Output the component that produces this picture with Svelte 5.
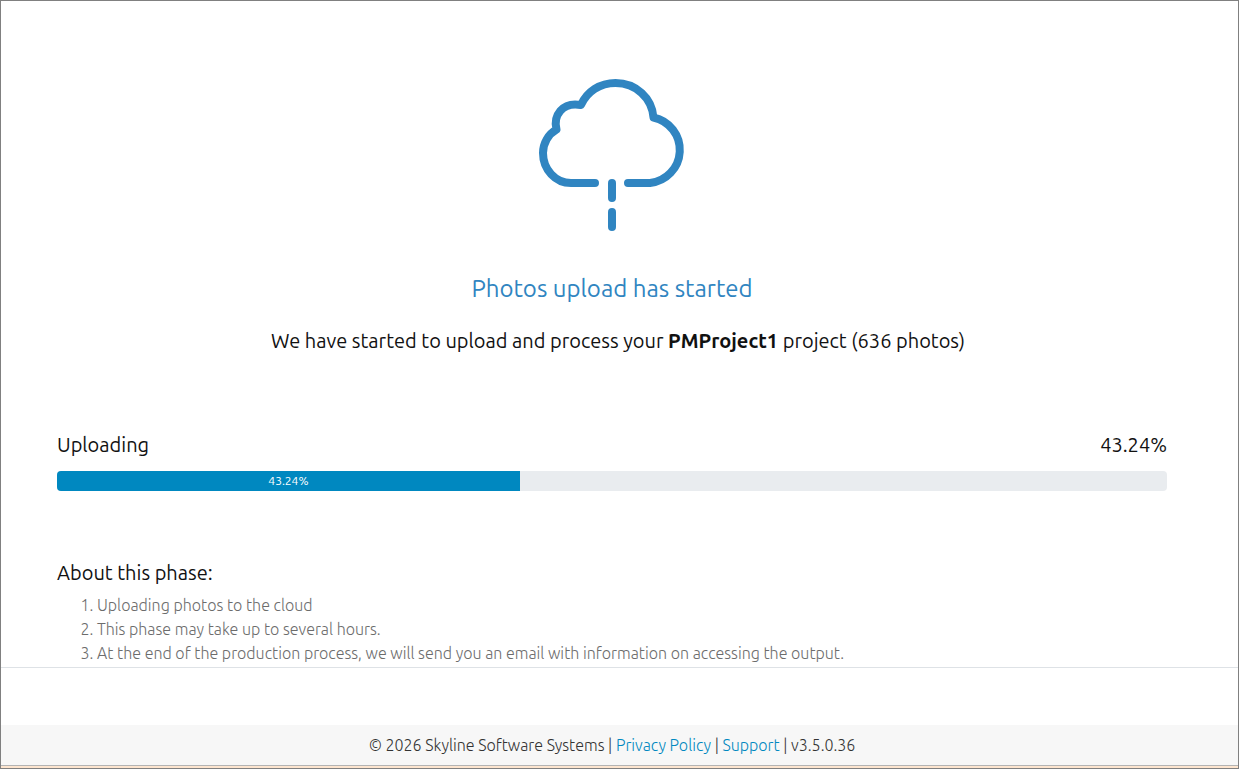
<script lang="ts">
  interface Props {
    project?: string;
    photos?: number;
    progress?: number;
    /** Drawn width of the bar, which trails the real progress */
    filled?: number;
    version?: string;
  }

  let {
    project = 'PMProject1',
    photos = 636,
    progress = 43.24,
    filled = 41.7,
    version = 'v3.5.0.36',
  }: Props = $props();

  const notes = [
    'Uploading photos to the cloud',
    'This phase may take up to several hours.',
    'At the end of the production process, we will send you an email with information on accessing the output.',
  ];

  let percent = $derived(`${progress.toFixed(2)}%`);
</script>

<div class="page">
  <main class="content">
    <svg class="cloud" viewBox="0 0 153 160" aria-hidden="true">
      <path d="M59 108H35C19.500 108 7 94.500 7 78C7 68 12.500 59 20.500 54.500C17 41 26 26.500 45 30C51 16.500 64 8 79.500 8C100 8 116 23 117.500 42.500A33.200 33.200 0 0 1 114 108H92" />
      <path d="M76 108V123M76 137V152" />
    </svg>

    <h1 class="title">Photos upload has started</h1>
    <p class="message">
      We have started to upload and process your <strong>{project}</strong> project ({photos} photos)
    </p>

    <section class="upload">
      <div class="upload__head">
        <span id="upload-label">Uploading</span>
        <span>{percent}</span>
      </div>
      <div
        class="bar"
        role="progressbar"
        aria-labelledby="upload-label"
        aria-valuemin="0"
        aria-valuemax="100"
        aria-valuenow={progress}
      >
        <div class="bar__fill" style:width={`${filled}%`}>{percent}</div>
      </div>
    </section>

    <section class="about">
      <h2 class="about__title">About this phase:</h2>
      <ol class="about__list">
        {#each notes as note}
          <li>{note}</li>
        {/each}
      </ol>
    </section>
  </main>

  <footer class="footer">
    © 2026 Skyline Software Systems | <a href="#privacy">Privacy Policy</a> | <a href="#support">Support</a> | {version}
  </footer>
</div>

<style>
  :global(body) {
    margin: 0;
    background: #fff;
  }

  .page {
    box-sizing: border-box;
    display: flex;
    flex-direction: column;
    min-height: 100vh;
    border: 1px solid #808080;
    font-family: Ubuntu, 'Noto Sans', sans-serif;
    font-size: 20px;
    line-height: 28px;
    color: #111;
  }

  .content {
    display: flex;
    flex-direction: column;
    padding: 74px 71px 0 56px;
    border-bottom: 1px solid #dee2e6;
  }

  .cloud {
    align-self: center;
    width: 153px;
    height: 160px;
    fill: none;
    stroke: #3085c1;
    stroke-width: 8;
    stroke-linecap: round;
    stroke-linejoin: round;
  }

  .title {
    margin: 37px 0 0;
    font-size: 24px;
    font-weight: 400;
    line-height: 34px;
    text-align: center;
    color: #3085c1;
  }

  .message {
    margin: 21px 0 0;
    padding-left: 12px;
    text-align: center;
  }

  .upload {
    margin-top: 76px;
  }

  .upload__head {
    display: flex;
    justify-content: space-between;
  }

  .bar {
    height: 20px;
    margin-top: 12px;
    overflow: hidden;
    border-radius: 4px;
    background: #e9ecef;
  }

  .bar__fill {
    height: 100%;
    background: #0088c0;
    color: #fff;
    font-size: 12px;
    line-height: 20px;
    text-align: center;
  }

  .about {
    margin-top: 68px;
  }

  .about__title {
    margin: 0;
    font-size: 20px;
    font-weight: 400;
    line-height: 28px;
  }

  .about__list {
    margin: 6px 0 0;
    padding: 0 0 2px 40px;
    font-size: 16px;
    font-weight: 300;
    line-height: 24px;
    color: #6c6c6c;
  }

  .footer {
    margin-top: auto;
    padding: 6px 15px 6px 0;
    border-bottom: 1px solid #b4b4b4;
    box-shadow: 0 2px #fde5cf;
    margin-bottom: 2px;
    background: #f7f7f7;
    font-size: 16px;
    font-weight: 300;
    text-align: center;
    color: #333;
  }

  .footer a {
    color: #0088c0;
    text-decoration: none;
  }
</style>
